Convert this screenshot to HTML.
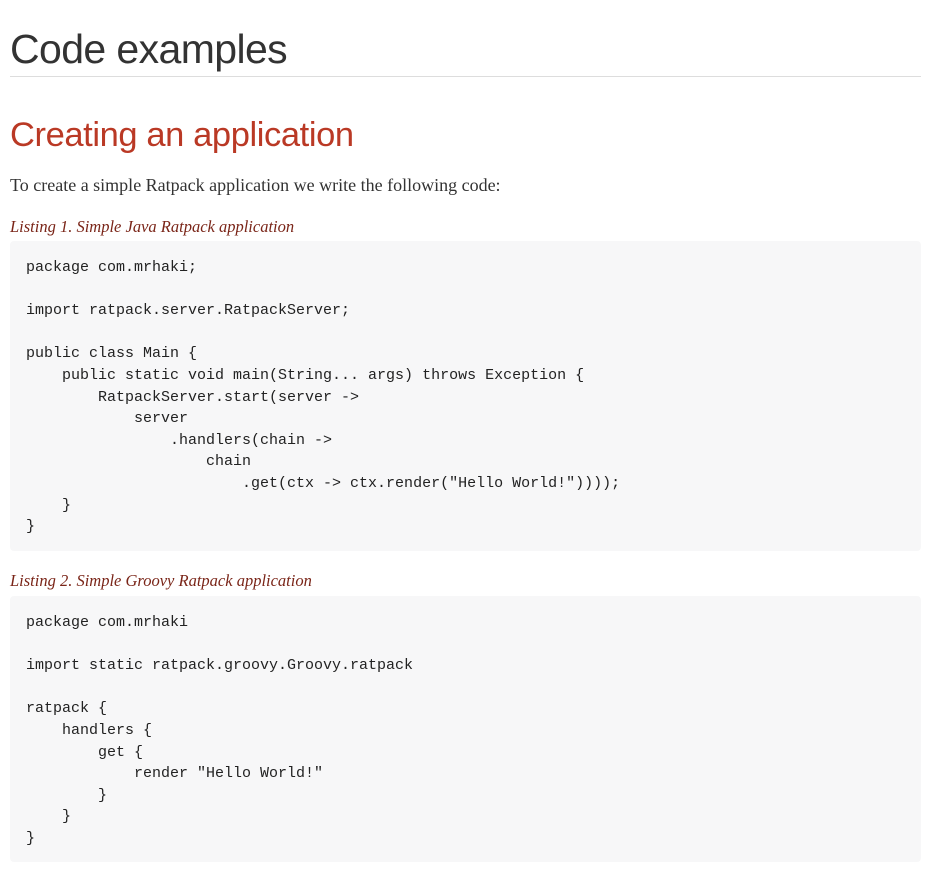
<!DOCTYPE html>
<html><head><meta charset="utf-8"><style>
body{margin:0;background:#fff;width:940px;height:893px;position:relative;overflow:hidden}
.a{position:absolute;left:10px;white-space:nowrap}
h1{margin:0;font:300 41px/1 "Liberation Sans",sans-serif;color:#333;top:29px;letter-spacing:-0.6px}
.hr{position:absolute;left:10px;width:911px;top:76px;height:1px;background:#ddd}
h2{margin:0;font:300 34.5px/1 "Liberation Sans",sans-serif;color:#ba3925;top:118px;letter-spacing:-0.4px}
.p{font:18px/1 "Liberation Serif",serif;color:#333;top:176px}
.t{font:italic 16.5px/1 "Liberation Serif",serif;color:#7a2518}
pre{position:absolute;left:10px;width:911px;margin:0;background:#f7f7f8;border-radius:4px;box-sizing:border-box;padding:16px 16px 14px;font:15px/21.6px "Liberation Mono",monospace;color:#222}
</style></head><body>
<h1 class="a">Code examples</h1>
<div class="hr"></div>
<h2 class="a">Creating an application</h2>
<div class="a p">To create a simple Ratpack application we write the following code:</div>
<div class="a t" style="top:219px">Listing 1. Simple Java Ratpack application</div>
<pre style="top:241px;height:310px">package com.mrhaki;

import ratpack.server.RatpackServer;

public class Main {
    public static void main(String... args) throws Exception {
        RatpackServer.start(server -&gt;
            server
                .handlers(chain -&gt;
                    chain
                        .get(ctx -&gt; ctx.render("Hello World!"))));
    }
}</pre>
<div class="a t" style="top:573px">Listing 2. Simple Groovy Ratpack application</div>
<pre style="top:596px;height:266px">package com.mrhaki

import static ratpack.groovy.Groovy.ratpack

ratpack {
    handlers {
        get {
            render "Hello World!"
        }
    }
}</pre>
</body></html>
